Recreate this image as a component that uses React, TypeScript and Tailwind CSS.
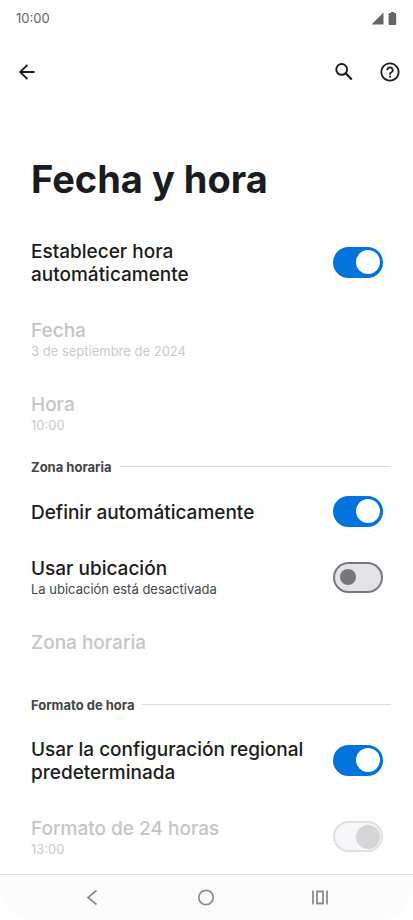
import { useState } from 'react';

type RowProps = {
  id: string;
  title: string;
  detail?: string;
  disabled?: boolean;
  toggle?: boolean;
  on?: boolean;
  size: string;
};

function Toggle({ id, on, disabled }: { id: string; on: boolean; disabled?: boolean }) {
  const [checked, setChecked] = useState(on);
  const track = disabled
    ? 'border-2 border-[#e0e0e2] bg-[#f6f6f8] before:size-6 before:bg-[#d5d5d8]'
    : checked
      ? 'border-2 border-[#0073dd] bg-[#0073dd] before:size-6 before:bg-white'
      : 'border-2 border-[#797780] bg-[#e3e2e9] before:size-4 before:bg-[#777777]';
  return (
    <input
      id={id}
      type="checkbox"
      role="switch"
      checked={checked}
      disabled={disabled}
      onChange={(e) => setChecked(e.target.checked)}
      className={`mb-0.5 flex h-[31px] w-[50px] shrink-0 appearance-none items-center rounded-full before:block before:rounded-full before:content-[''] ${track} ${
        checked ? 'justify-end pr-px' : 'justify-start pl-[5px]'
      }`}
    />
  );
}

function Row({ id, title, detail, disabled, toggle, on = false, size }: RowProps) {
  const text = (
    <>
      <span className={`block text-[19px] leading-[23px] font-medium ${disabled ? 'text-[#c5c5c5]' : 'text-[#1b1c20]'}`}>
        {title}
      </span>
      {detail && (
        <span className={`block text-[13px] leading-[19px] ${disabled ? 'text-[#cbcbcb]' : 'text-[#46464a]'}`}>
          {detail}
        </span>
      )}
    </>
  );
  if (!toggle) {
    return (
      <button type="button" disabled={disabled} className={`flex w-full flex-col items-start justify-center text-left ${size}`}>
        {text}
      </button>
    );
  }
  return (
    <div className={`flex items-center justify-between gap-4 ${size}`}>
      <label htmlFor={id}>{text}</label>
      <Toggle id={id} on={on} disabled={disabled} />
    </div>
  );
}

function SectionTitle({ children }: { children: string }) {
  return (
    <div className="-mr-2 flex h-8 items-center gap-2">
      <h2 className="text-[13px] leading-4 font-bold text-[#444448]">{children}</h2>
      <div className="mb-0.5 h-px flex-1 bg-[#dfdcdf]" />
    </div>
  );
}

export default function App() {
  return (
    <div className="flex min-h-screen flex-col bg-[#fefefe] font-['Inter','Liberation_Sans',sans-serif] text-[#1b1c20]">
      <div className="flex h-9 items-center justify-between pr-4 pl-4 text-[13px] leading-4 text-[#666666]">
        <span>10:00</span>
        <div className="flex items-center gap-1">
          <svg width="13" height="13" viewBox="0 0 13 13" fill="#666666" aria-hidden="true">
            <path d="M12.5 .5V12.500H.5z" />
          </svg>
          <svg width="9" height="13" viewBox="0 0 9 13" fill="#666666" aria-hidden="true">
            <path d="M3 0h3v1h1.2q1 0 1 1v10q0 1-1 1H1.6q-1 0-1-1V2q0-1 1-1H3z" />
          </svg>
        </div>
      </div>

      <header className="flex h-[72px] items-center justify-between pr-3 pl-4">
        <button type="button" aria-label="Atrás">
          <svg width="22" height="22" viewBox="0 0 22 22" fill="none" stroke="currentColor" strokeWidth="1.9" aria-hidden="true">
            <path d="M18.5 11H4.5M11.4 3.8L4.2 11l7.2 7.2" />
          </svg>
        </button>
        <div className="flex items-center gap-6">
          <button type="button" aria-label="Buscar">
            <svg width="22" height="22" viewBox="0 0 22 22" fill="none" stroke="currentColor" strokeWidth="1.9" aria-hidden="true">
              <circle cx="8.7" cy="8.4" r="5.4" />
              <path d="M12.6 12.3l6.2 6.2" strokeWidth="2.2" />
            </svg>
          </button>
          <button type="button" aria-label="Ayuda">
            <svg width="22" height="22" viewBox="0 0 24 24" fill="currentColor" aria-hidden="true">
              <path d="M11 18h2v-2h-2zM12 1.6C6.3 1.6 1.6 6.3 1.6 12S6.3 22.4 12 22.4 22.4 17.7 22.4 12 17.7 1.6 12 1.6zm0 18.8c-4.6 0-8.4-3.8-8.4-8.4S7.4 3.6 12 3.6s8.4 3.8 8.4 8.4-3.8 8.4-8.4 8.4zM12 6c-2.21 0-4 1.79-4 4h2c0-1.100.9-2 2-2s2 .9 2 2c0 2-3 1.75-3 5h2c0-2.25 3-2.5 3-5 0-2.21-1.79-4-4-4z" />
            </svg>
          </button>
        </div>
      </header>

      <main className="flex-1 pt-[47px] pr-[30px] pl-[31px]">
        <h1 className="mb-5 text-[38px] leading-[48px] font-bold">Fecha y hora</h1>
        <Row id="auto-time" title="Establecer hora automáticamente" toggle on size="min-h-20" />
        <Row id="date" title="Fecha" detail="3 de septiembre de 2024" disabled size="min-h-[74px]" />
        <Row id="time" title="Hora" detail="10:00" disabled size="min-h-[74px]" />
        <SectionTitle>Zona horaria</SectionTitle>
        <Row id="auto-zone" title="Definir automáticamente" toggle on size="min-h-[58px]" />
        <Row id="location" title="Usar ubicación" detail="La ubicación está desactivada" toggle size="min-h-[74px]" />
        <Row id="zone" title="Zona horaria" disabled size="mb-5 min-h-[54px]" />
        <SectionTitle>Formato de hora</SectionTitle>
        <Row id="locale" title="Usar la configuración regional predeterminada" toggle on size="min-h-20" />
        <Row id="format-24" title="Formato de 24 horas" detail="13:00" toggle on disabled size="min-h-[73px]" />
      </main>

      <nav className="flex h-[46px] items-center justify-center gap-[90px] rounded-b-[32px] border-t border-[#dedede] bg-[#fbfbfb] pr-px text-[#8d8d8d]">
        <button type="button" aria-label="Volver">
          <svg width="24" height="24" viewBox="0 0 24 24" fill="none" stroke="currentColor" strokeWidth="1.7" aria-hidden="true">
            <path d="M16.500 4.500l-8.500 7 8.500 7" />
          </svg>
        </button>
        <button type="button" aria-label="Inicio">
          <svg width="24" height="24" viewBox="0 0 24 24" fill="none" stroke="currentColor" strokeWidth="1.7" aria-hidden="true">
            <circle cx="12" cy="11.5" r="7.2" />
          </svg>
        </button>
        <button type="button" aria-label="Recientes">
          <svg width="24" height="24" viewBox="0 0 24 24" fill="none" stroke="currentColor" strokeWidth="1.8" aria-hidden="true">
            <path d="M5 4.500v14M19 4.500v14M9 5.500h6v12H9z" />
          </svg>
        </button>
      </nav>
    </div>
  );
}
